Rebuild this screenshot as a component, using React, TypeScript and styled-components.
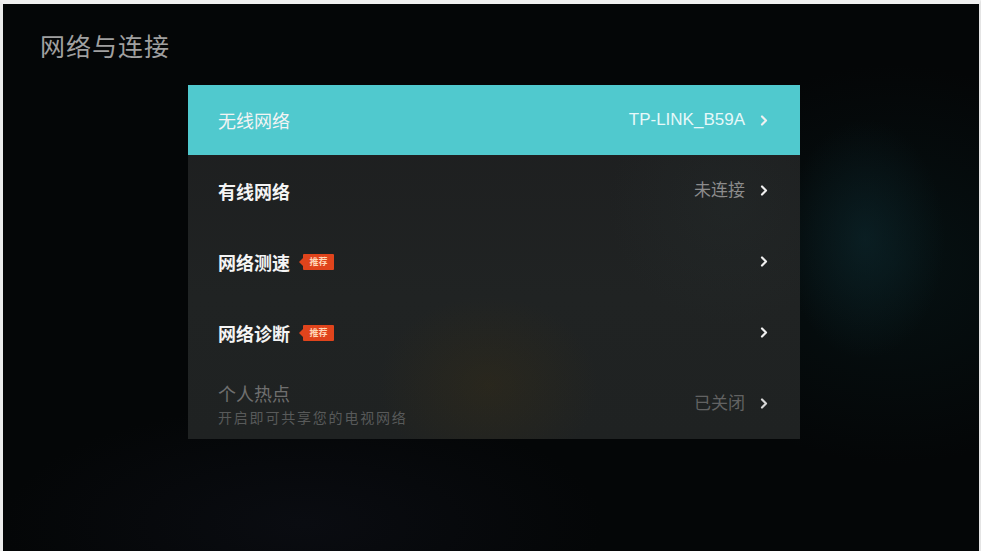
import { createGlobalStyle, styled } from "styled-components"

const GlobalStyle = createGlobalStyle`
  html, body {
    margin: 0;
    padding: 0;
    background: #f2f2f2;
  }
  * {
    box-sizing: border-box;
  }
`

const Screen = styled.div`
  width: 981px;
  height: 551px;
  border-top: 4px solid #f0f0f0;
  border-left: 3px solid #ececec;
  border-right: 2px solid #e4e4e4;
  display: flex;
  flex-direction: column;
  overflow: hidden;
  font-family: "Noto Sans CJK SC", "Noto Sans", "Liberation Sans", sans-serif;
  background:
    radial-gradient(ellipse 80px 120px at 862px 235px, rgba(16, 48, 56, 0.45), transparent 100%),
    radial-gradient(ellipse 240px 200px at 890px 260px, rgba(8, 28, 30, 0.5), transparent 100%),
    radial-gradient(ellipse 300px 120px at 300px 520px, rgba(14, 16, 24, 0.6), transparent 100%),
    #040607;
`

const Header = styled.h1`
  margin: 0;
  padding: 26px 0 0 37px;
  font-size: 25px;
  line-height: 31px;
  font-weight: 400;
  color: #a0a0a0;
  letter-spacing: 1px;
`

const Panel = styled.div`
  margin: 24px 0 0 185px;
  width: 612px;
  display: flex;
  flex-direction: column;
  background:
    radial-gradient(ellipse 110px 90px at 300px 300px, rgba(64, 50, 18, 0.3), transparent 100%),
    radial-gradient(ellipse 120px 120px at 540px 120px, rgba(40, 50, 50, 0.25), transparent 100%),
    linear-gradient(180deg, #1d1e1f 0%, #202323 60%, #1f2222 100%);
`

const Row = styled.div<{ $active?: boolean; $height?: number }>`
  height: ${p => p.$height ?? 71}px;
  display: flex;
  align-items: center;
  justify-content: space-between;
  padding: 0 30px;
  background: ${p => (p.$active ? "#50c9ce" : "transparent")};
`

const LabelGroup = styled.div`
  display: flex;
  flex-direction: column;
  gap: 4px;
`

const LabelLine = styled.div`
  display: flex;
  align-items: center;
  gap: 10px;
`

const Label = styled.span<{ $dim?: boolean; $bold?: boolean }>`
  font-size: 18px;
  line-height: 22px;
  font-weight: ${p => (p.$bold ? 700 : 400)};
  color: ${p => (p.$dim ? "#6f6f6f" : "#f4f4f4")};
`

const Sub = styled.span`
  font-size: 14px;
  line-height: 18px;
  color: #585a5a;
  letter-spacing: 1.8px;
`

const Badge = styled.span`
  position: relative;
  display: inline-flex;
  align-items: center;
  justify-content: center;
  width: 31px;
  height: 16px;
  margin-left: 3px;
  background: #e0441c;
  color: #ffd7b8;
  font-size: 9px;
  line-height: 1;
  font-weight: 700;
  border-radius: 1px;
  &::before {
    content: "";
    position: absolute;
    left: -4px;
    top: 4px;
    border-top: 4px solid transparent;
    border-bottom: 4px solid transparent;
    border-right: 4px solid #e0441c;
  }
`

const Value = styled.div`
  display: flex;
  align-items: center;
  gap: 15px;
`

const ValueText = styled.span<{ $tone: "light" | "mid" | "dim" }>`
  font-size: 17px;
  line-height: 22px;
  font-family: "Liberation Sans", "Noto Sans CJK SC", sans-serif;
  color: ${p => (p.$tone === "light" ? "#e6f8f9" : p.$tone === "mid" ? "#8c8c8c" : "#626262")};
`

const Chevron = ({ color = "#f0f0f0" }: { color?: string }) => (
  <svg width="8" height="11" viewBox="0 0 8 11" style={{ display: "block", marginRight: 2 }}>
    <path d="M2 1.5 L6 5.5 L2 9.5" fill="none" stroke={color} strokeWidth="2.2" strokeLinecap="round" strokeLinejoin="round" />
  </svg>
)

export default function App() {
  return (
    <>
      <GlobalStyle />
      <Screen>
        <Header>网络与连接</Header>
        <Panel>
          <Row $active $height={70}>
            <Label>无线网络</Label>
            <Value>
              <ValueText $tone="light">TP-LINK_B59A</ValueText>
              <Chevron />
            </Value>
          </Row>
          <Row>
            <Label $bold>有线网络</Label>
            <Value>
              <ValueText $tone="mid">未连接</ValueText>
              <Chevron />
            </Value>
          </Row>
          <Row>
            <LabelLine>
              <Label $bold>网络测速</Label>
              <Badge>推荐</Badge>
            </LabelLine>
            <Value>
              <Chevron />
            </Value>
          </Row>
          <Row>
            <LabelLine>
              <Label $bold>网络诊断</Label>
              <Badge>推荐</Badge>
            </LabelLine>
            <Value>
              <Chevron />
            </Value>
          </Row>
          <Row>
            <LabelGroup>
              <Label $dim>个人热点</Label>
              <Sub>开启即可共享您的电视网络</Sub>
            </LabelGroup>
            <Value>
              <ValueText $tone="dim">已关闭</ValueText>
              <Chevron color="#d8d8d8" />
            </Value>
          </Row>
        </Panel>
      </Screen>
    </>
  )
}
